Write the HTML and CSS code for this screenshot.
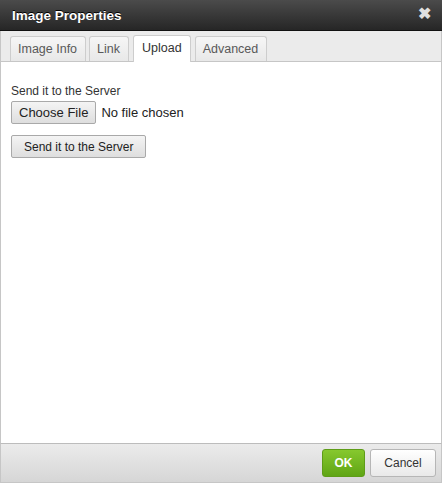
FILE: index.html
```html
<!DOCTYPE html>
<html>
<head>
<meta charset="utf-8">
<link rel="stylesheet" href="styles.css">
</head>
<body>
<div class="dialog">
  <div class="titlebar">
    <span class="title">Image Properties</span>
    <span class="close">&#x2716;</span>
  </div>
  <div class="tabs">
    <div class="tab">Image Info</div>
    <div class="tab">Link</div>
    <div class="tab active">Upload</div>
    <div class="tab">Advanced</div>
  </div>
  <div class="content">
    <div class="label">Send it to the Server</div>
    <div class="filerow">
      <button class="filebtn">Choose File</button>
      <span class="nofile">No file chosen</span>
    </div>
    <button class="sendbtn">Send it to the Server</button>
  </div>
  <div class="footer">
    <button class="ok">OK</button>
    <button class="cancel">Cancel</button>
  </div>
</div>
</body>
</html>
```
FILE: styles.css
```css
html, body {
  margin: 0;
  padding: 0;
  background: #fff;
}
body {
  font-family: "Liberation Sans", Arial, sans-serif;
  font-size: 12px;
  color: #333;
}
.dialog {
  width: 442px;
  height: 483px;
  display: flex;
  flex-direction: column;
  box-sizing: border-box;
}
.titlebar {
  height: 31px;
  box-sizing: border-box;
  background: linear-gradient(#4b4b4b, #262626);
  border-bottom: 1px solid #111;
  display: flex;
  align-items: center;
  justify-content: space-between;
  padding: 0 11px 0 12px;
}
.title {
  color: #fff;
  font-weight: bold;
  font-size: 13.5px;
  margin-top: 1px;
  text-shadow: 0 -1px 0 #000;
}
.close {
  color: #e0e0e0;
  font-size: 16px;
  font-weight: bold;
  margin-top: -3px;
}
.tabs {
  height: 31px;
  box-sizing: border-box;
  background: #ebebeb;
  border-bottom: 1px solid #c6c6c6;
  border-left: 1px solid #c6c6c6;
  border-right: 1px solid #c6c6c6;
  display: flex;
  align-items: flex-end;
  padding-left: 9px;
  gap: 3px;
}
.tab {
  height: 25px;
  box-sizing: border-box;
  border: 1px solid #cdcdcd;
  border-bottom: none;
  border-radius: 3px 3px 0 0;
  background: linear-gradient(#f6f6f6, #e8e8e8);
  color: #595959;
  font-size: 12.5px;
  padding: 0 8px 0 7px;
  line-height: 24px;
}
.tab.active {
  background: #fff;
  height: 27px;
  line-height: 25px;
  margin-bottom: -1px;
  margin-left: 1px;
  margin-right: 1px;
  padding: 0 8px;
  color: #333;
}
.content {
  flex: 1;
  background: #fff;
  border-left: 1px solid #c6c6c6;
  border-right: 1px solid #c6c6c6;
  padding: 22px 10px 0 10px;
}
.label {
  color: #333;
  line-height: 14px;
  margin-bottom: 3px;
}
.filerow {
  display: flex;
  align-items: center;
  gap: 5px;
}
button {
  font-family: "Liberation Sans", Arial, sans-serif;
  font-size: 13px;
  cursor: default;
}
.filebtn {
  height: 23px;
  border: 1px solid #a9a9a9;
  border-radius: 2px;
  background: linear-gradient(#f4f4f4, #dedede);
  color: #222;
  padding: 0 7px;
}
.nofile {
  font-size: 13px;
  color: #222;
}
.sendbtn {
  margin-top: 11px;
  height: 23px;
  border: 1px solid #a9a9a9;
  border-radius: 2px;
  background: linear-gradient(#f4f4f4, #dedede);
  color: #222;
  font-size: 12px;
  padding: 0 12px;
}
.footer {
  height: 40px;
  box-sizing: border-box;
  border-top: 1px solid #bcbcbc;
  border-left: 1px solid #c6c6c6;
  border-right: 1px solid #c6c6c6;
  border-bottom: 1px solid #c6c6c6;
  background: linear-gradient(#ebebeb, #d6d6d6);
  display: flex;
  justify-content: flex-end;
  align-items: center;
  gap: 5px;
  padding-right: 5px;
}
.ok {
  height: 28px;
  width: 43px;
  border: 1px solid #5e9c18;
  border-radius: 3px;
  background: linear-gradient(#86c82e, #5fa515);
  color: #fff;
  font-weight: bold;
  font-size: 12px;
}
.cancel {
  height: 28px;
  width: 66px;
  border: 1px solid #b6b6b6;
  border-radius: 3px;
  background: linear-gradient(#ffffff, #e9e9e9);
  color: #333;
  font-size: 12px;
}
```
